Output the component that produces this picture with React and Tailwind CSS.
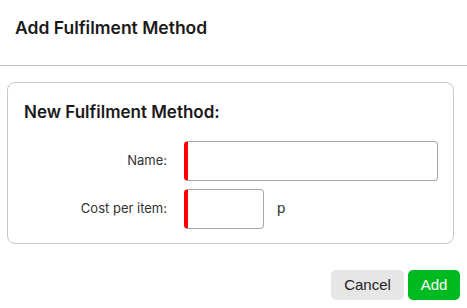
import React from "react";

const App = () => {
    // --- Theme ---
    const fontHead = { fontFamily: "Inter, 'Noto Sans', sans-serif" };

    return (
        <div className="w-[467px] h-[308px] bg-white text-[#1a1a1a]" style={fontHead}>

            {/* HEADER */}
            <div className="h-[66px] border-b border-[#bdbdbd] px-[15px] pt-[15px]">
                <h1 className="text-[17.5px] font-semibold">Add Fulfilment Method</h1>
            </div>

            {/* CARD */}
            <div className="ml-[7px] mr-[13px] mt-[16px] h-[162px] rounded-[8px] border border-[#c8c8c8] px-[16px] pt-[17px]">
                <h2 className="text-[17px] font-semibold">New Fulfilment Method:</h2>

                <div className="mt-[15px] grid grid-cols-[143px_1fr] gap-x-[17px] gap-y-[8px] items-center text-[13px] text-[#333]">
                    <label className="text-right">Name:</label>
                    <input className="h-[40px] w-[254px] rounded-[4px] border border-[#a8a8a8] border-l-[4px] border-l-[#ff0000] outline-none" />

                    <label className="text-right">Cost per item:</label>
                    <div className="flex items-center gap-[13px]">
                        <input className="h-[40px] w-[80px] rounded-[4px] border border-[#a8a8a8] border-l-[4px] border-l-[#ff0000] outline-none" />
                        <span className="text-[15px]" style={{ fontFamily: "'Liberation Sans', Arial, sans-serif" }}>p</span>
                    </div>
                </div>
            </div>

            {/* ACTIONS */}
            <div className="flex justify-end gap-[4px] pr-[7px] mt-[26px]" style={{ fontFamily: "'Liberation Sans', Arial, sans-serif" }}>
                <button className="h-[30px] w-[73px] rounded-[5px] bg-[#e6e6e6] text-[15px] text-[#222]">Cancel</button>
                <button className="h-[30px] w-[52px] rounded-[5px] bg-[#00bb1f] text-[15px] text-white">Add</button>
            </div>
        </div>
    );
};

export default App;
